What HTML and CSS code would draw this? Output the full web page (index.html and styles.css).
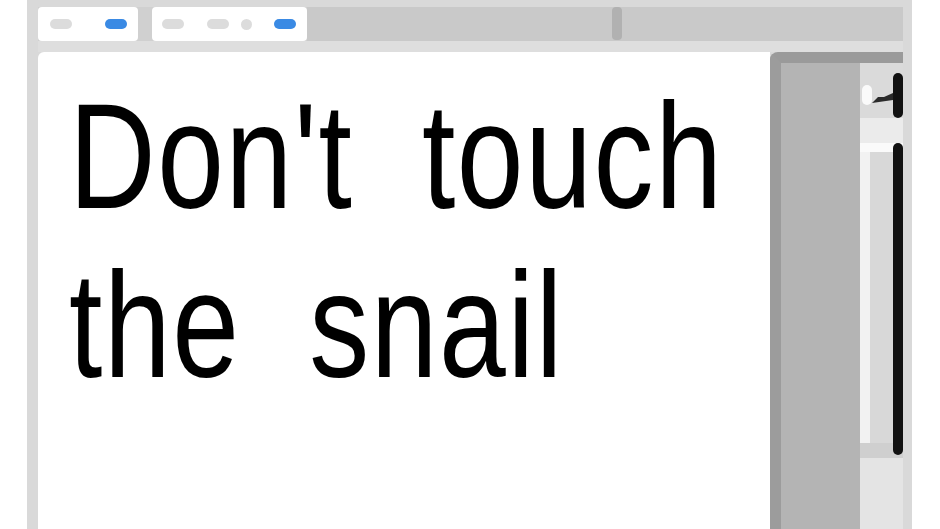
FILE: index.html
```html
<!DOCTYPE html>
<html lang="en">
<head>
    <meta charset="UTF-8">
    <meta name="viewport" content="width=device-width, initial-scale=1.0">
    <title>Don't touch the snail</title>
    <link rel="stylesheet" href="styles.css">
</head>
<body>
    <div class="window">
        <div class="tabbar">
            <div class="tab tab-short">
                <span class="pill"></span>
                <span class="pill blue"></span>
            </div>
            <div class="tab tab-long">
                <span class="pill"></span>
                <span class="pill"></span>
                <span class="dot"></span>
                <span class="pill blue"></span>
            </div>
            <div class="tab-strip">
                <span class="handle"></span>
            </div>
        </div>
        <div class="band"></div>
        <div class="main">
            <div class="page">
                <h1 class="headline">Don't touch<br>the snail</h1>
            </div>
            <div class="side">
                <div class="side-panel"></div>
                <div class="scroll">
                    <div class="scroll-head">
                        <svg width="43" height="55" viewBox="0 0 43 55">
                            <rect x="2" y="22" width="10" height="20" rx="5" fill="#fafafa"/>
                            <path d="M12 40 L18 34 L24 34 L33 30 L33 37 Z" fill="#2a2a2a"/>
                            <rect x="33" y="10" width="10" height="45" rx="5" fill="#111"/>
                        </svg>
                    </div>
                    <div class="scroll-gap"></div>
                    <div class="scroll-track">
                        <div class="track-light"></div>
                        <div class="track-mid"></div>
                        <div class="track-bar"></div>
                    </div>
                    <div class="scroll-foot"></div>
                </div>
            </div>
        </div>
    </div>
</body>
</html>
```

FILE: styles.css
```css
body {
    margin: 0;
    background-color: #fff;
    font-family: "Liberation Sans", Arial, sans-serif;
    overflow: hidden;
}

.window {
    margin-left: 27px;
    width: 885px;
    height: 529px;
    box-sizing: border-box;
    padding: 7px 9px 0 11px;
    background-color: #d9d9d9;
    display: flex;
    flex-direction: column;
}

/* tabs */

.tabbar {
    height: 34px;
    display: flex;
    background-color: #d0d0d0;
}

.tab {
    background-color: #fff;
    border-radius: 4px;
    display: flex;
    align-items: center;
    box-sizing: border-box;
}

.tab-short {
    width: 100px;
    padding-left: 12px;
    gap: 33px;
    margin-right: 14px;
}

.tab-long {
    width: 155px;
    padding-left: 10px;
}

.pill {
    width: 22px;
    height: 10px;
    border-radius: 5px;
    background-color: #dcdcdc;
}

.pill.blue {
    background-color: #3a8ae4;
}

.tab-long .pill:nth-child(2) {
    margin-left: 23px;
}

.dot {
    width: 11px;
    height: 11px;
    border-radius: 50%;
    background-color: #dcdcdc;
    margin-left: 12px;
}

.tab-long .pill.blue {
    margin-left: 22px;
}

.tab-strip {
    flex: 1;
    background-color: #c9c9c9;
    padding-left: 305px;
}

.handle {
    display: block;
    width: 10px;
    height: 33px;
    border-radius: 4px;
    background-color: #b1b1b1;
}

.band {
    height: 11px;
    background-color: #dedede;
}

/* content */

.main {
    flex: 1;
    display: flex;
    min-height: 0;
}

.page {
    flex: 1;
    min-width: 0;
    overflow: hidden;
    background-color: #fff;
    border-top-left-radius: 6px;
    padding: 20px 0 0 31px;
}

/* the letters are tall and narrow, so squeeze the face sideways */
.headline {
    margin: 0;
    width: 880px;
    font-size: 150px;
    line-height: 169px;
    font-weight: normal;
    letter-spacing: 2px;
    word-spacing: 42px;
    white-space: nowrap;
    color: #000;
    transform: scaleX(0.8);
    transform-origin: left top;
}

/* right hand panel */

.side {
    width: 133px;
    display: flex;
    border-top: 11px solid #9a9a9a;
    border-left: 11px solid #9c9c9c;
    border-top-left-radius: 8px;
    box-sizing: border-box;
}

.side-panel {
    width: 79px;
    background-color: #b4b4b4;
}

.scroll {
    flex: 1;
    display: flex;
    flex-direction: column;
}

.scroll-head {
    height: 55px;
    background-color: #dadada;
}

.scroll-head svg {
    display: block;
}

.scroll-gap {
    height: 25px;
    background-color: #ebebeb;
}

.scroll-track {
    height: 291px;
    display: grid;
    grid-template-columns: 10px 23px 10px;
    background-color: #d8d8d8;
    border-top: 9px solid #fafafa;
    border-bottom: 15px solid #cfcfcf;
}

.track-light {
    background-color: #f2f2f2;
}

.track-mid {
    background-color: #d8d8d8;
}

.track-bar {
    background-color: #111;
    border-radius: 5px;
    margin-top: -9px;
    margin-bottom: -12px;
}

.scroll-foot {
    flex: 1;
    background-color: #e4e4e4;
}
```
